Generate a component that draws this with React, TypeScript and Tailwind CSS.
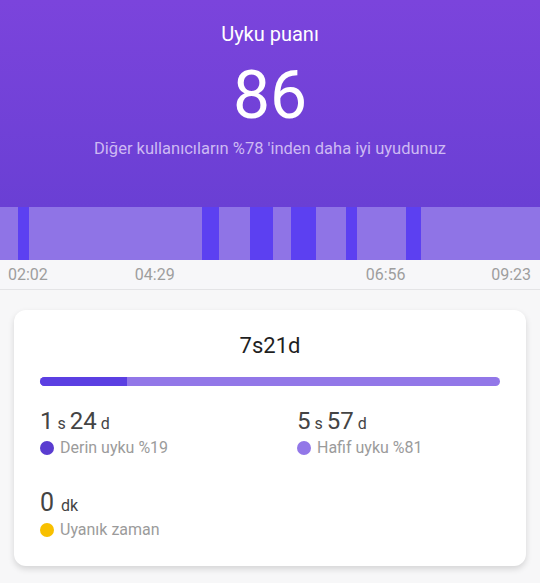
import React from 'react';

type Seg = { w: number; deep: boolean };

const segments: Seg[] = [
  { w: 18, deep: false },
  { w: 11, deep: true },
  { w: 173, deep: false },
  { w: 17, deep: true },
  { w: 31, deep: false },
  { w: 23, deep: true },
  { w: 18, deep: false },
  { w: 25, deep: true },
  { w: 30, deep: false },
  { w: 11, deep: true },
  { w: 49, deep: false },
  { w: 15, deep: true },
];

const Duration: React.FC<{ parts: [string, string][] }> = ({ parts }) => (
  <div className="flex items-baseline text-[#444444]">
    {parts.map(([num, unit], i) => (
      <React.Fragment key={i}>
        <span className="text-[24px] leading-[30px]">{num}</span>
        <span className="text-[16px] mx-[4px]">{unit}</span>
      </React.Fragment>
    ))}
  </div>
);

const Legend: React.FC<{ color: string; label: string }> = ({ color, label }) => (
  <div className="flex items-center mt-[1px]">
    <span className={`w-[14px] h-[14px] rounded-full ${color}`}></span>
    <span className="ml-[6px] text-[16px] leading-[22px] text-[#9b9b9b]">{label}</span>
  </div>
);

export default function App() {
  return (
    <div className="w-[540px] h-[583px] bg-[#f7f7f8] overflow-hidden" style={{ fontFamily: 'Roboto, "Noto Sans", sans-serif' }}>
      <header className="h-[207px] bg-gradient-to-b from-[#7b44dc] to-[#6a3fd4] flex flex-col items-center pt-[22px]">
        <h1 className="text-[20px] leading-6 text-white">Uyku puanı</h1>
        <div className="mt-[17px] text-[66px] leading-none text-white">86</div>
        <p className="mt-[10px] text-[16.5px] leading-5 text-[#cdb9f3]">Diğer kullanıcıların %78 'inden daha iyi uyudunuz</p>
      </header>

      <div className="flex h-[53px] bg-[#8f74e6]">
        {segments.map((s, i) => (
          <div key={i} className={s.deep ? 'bg-[#5c40f1]' : 'bg-[#8f74e6]'} style={{ width: s.w }}></div>
        ))}
        <div className="flex-1"></div>
      </div>

      <div className="flex items-center h-[30px] bg-[#f7f7f9] border-b border-[#e4e4e6] text-[16px] text-[#9e9e9e] pl-[8px] pr-[9px]">
        <span>02:02</span>
        <span className="ml-[87px]">04:29</span>
        <span className="ml-[191px]">06:56</span>
        <span className="ml-auto">09:23</span>
      </div>

      <section className="mx-[14px] mt-[20px] h-[256px] bg-white rounded-[12px] shadow-[0_3px_6px_rgba(0,0,0,0.14)] px-[26px] pt-[22px]">
        <div className="text-center text-[22px] leading-[28px] text-[#1f1f1f]">7s21d</div>
        <div className="mt-[17px] h-[9px] rounded-full bg-[#9277e8] overflow-hidden flex">
          <div className="w-[19%] bg-[#5b3fe2]"></div>
        </div>

        <div className="grid grid-cols-[257px_1fr] mt-[20px]">
          <div>
            <Duration parts={[['1', 's'], ['24', 'd']]} />
            <Legend color="bg-[#5a3cd0]" label="Derin uyku %19" />
          </div>
          <div>
            <Duration parts={[['5', 's'], ['57', 'd']]} />
            <Legend color="bg-[#9277e8]" label="Hafif uyku %81" />
          </div>
        </div>

        <div className="mt-[29px]">
          <div className="flex items-baseline text-[#444444]">
            <span className="text-[25px] leading-[30px]">0</span>
            <span className="text-[16px] ml-[7px]">dk</span>
          </div>
          <Legend color="bg-[#f8c000]" label="Uyanık zaman" />
        </div>
      </section>
    </div>
  );
}
